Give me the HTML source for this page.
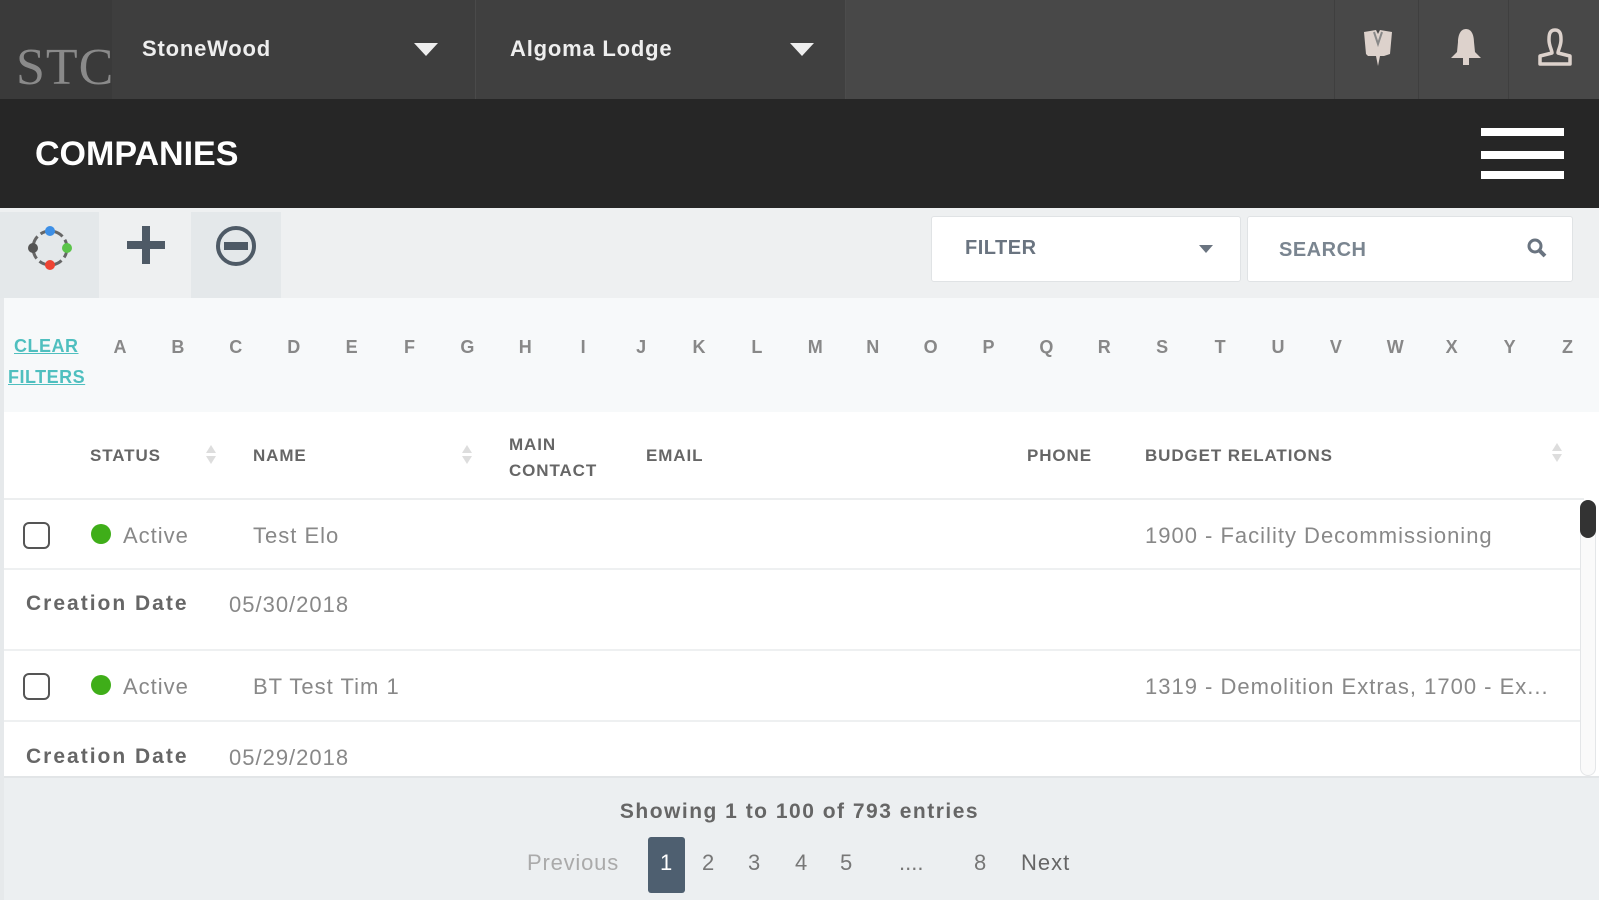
<!DOCTYPE html>
<html><head><meta charset="utf-8"><style>
*{margin:0;padding:0;box-sizing:border-box}
body{width:1599px;height:900px;overflow:hidden;background:#fff;font-family:"Liberation Sans",sans-serif;position:relative}
.a{position:absolute}
.top{left:0;top:0;width:1599px;height:99px;background:#484848}
.lt{color:#888;font-weight:bold;font-size:15px}
.hd{color:#666;font-weight:bold;font-size:17px;letter-spacing:0.9px}
.cell{color:#888;font-size:22px;letter-spacing:1px}
.cd{color:#666;font-weight:bold;font-size:21px;letter-spacing:2px}
.sort{width:8px}
.sort:before{content:"";position:absolute;left:0;top:0;border:5px solid transparent;border-bottom:8px solid #ddd;border-top:none}
.sort:after{content:"";position:absolute;left:0;top:11px;border:5px solid transparent;border-top:8px solid #ddd;border-bottom:none}
.cb{width:27px;height:27px;border:2.5px solid #555;border-radius:6px}
.dot{width:20px;height:20px;border-radius:50%;background:#3fae19}
.pg{font-size:22px;color:#777;top:850px}
</style></head><body>
<div class="a top"></div>
<div class="a" style="left:0;top:0;width:112px;height:99px;background:#3a3a3a"></div>
<div class="a" style="left:16px;top:38px;font-family:'Liberation Serif',serif;font-size:52px;color:#8a8a8a;letter-spacing:1px">STC</div>
<div class="a" style="left:112px;top:0;width:364px;height:99px;background:#3e3e3e;border-right:1px solid #4a4a4a"></div>
<div class="a" style="left:476px;top:0;width:370px;height:99px;background:#404040;border-right:1px solid #4c4c4c"></div>
<div class="a" style="left:142px;top:36px;color:#eee;font-weight:bold;font-size:22px;letter-spacing:0.8px">StoneWood</div>
<div class="a" style="left:414px;top:43px;border:12px solid transparent;border-top:13px solid #eee;border-bottom:none"></div>
<div class="a" style="left:510px;top:36px;color:#eee;font-weight:bold;font-size:22px;letter-spacing:0.8px">Algoma Lodge</div>
<div class="a" style="left:790px;top:43px;border:12px solid transparent;border-top:13px solid #eee;border-bottom:none"></div>
<div class="a" style="left:1334px;top:0;width:1px;height:99px;background:#3f3f3f"></div>
<div class="a" style="left:1418px;top:0;width:1px;height:99px;background:#3f3f3f"></div>
<div class="a" style="left:1508px;top:0;width:1px;height:99px;background:#3f3f3f"></div>
<svg class="a" style="left:1360px;top:26px" width="36" height="44" viewBox="0 0 36 44"><path d="M4 6 L16 4 L18 8 L20 4 L32 6 L30 28 L24 30 L20 30 L18 40 L16 30 L8 30 L6 28Z" fill="#ddd2cc"/><path d="M14 6 L18 18 L22 6" stroke="#888" stroke-width="2" fill="none"/></svg>
<svg class="a" style="left:1448px;top:26px" width="36" height="44" viewBox="0 0 36 44"><path d="M18 3 C24 3 26 10 26 16 L27 26 L33 32 L3 32 L9 26 L10 16 C10 10 12 3 18 3Z" fill="#ddd2cc"/><rect x="15" y="32" width="6" height="7" fill="#ddd2cc"/></svg>
<svg class="a" style="left:1534px;top:26px" width="42" height="44" viewBox="0 0 42 44"><path d="M21 4 C27 4 27 10 27 14 C27 20 24 24 24 27 L36 30 L36 38 L6 38 L6 30 L18 27 C18 24 15 20 15 14 C15 10 15 4 21 4Z" fill="none" stroke="#ddd2cc" stroke-width="3.5" stroke-linejoin="round"/></svg>

<div class="a" style="left:0;top:99px;width:1599px;height:109px;background:#262626"></div>
<div class="a" style="left:35px;top:135px;color:#fff;font-weight:bold;font-size:34px;letter-spacing:0px">COMPANIES</div>
<div class="a" style="left:1481px;top:128px;width:83px;height:8px;background:#fff"></div>
<div class="a" style="left:1481px;top:151px;width:83px;height:8px;background:#fff"></div>
<div class="a" style="left:1481px;top:171px;width:83px;height:8px;background:#fff"></div>

<div class="a" style="left:0;top:208px;width:1599px;height:90px;background:#eef0f1"></div>
<div class="a" style="left:0;top:212px;width:99px;height:86px;background:#e4e8ea"></div>
<div class="a" style="left:191px;top:212px;width:90px;height:86px;background:#e4e8ea"></div>
<svg class="a" style="left:26px;top:224px" width="48" height="48" viewBox="0 0 48 48"><circle cx="24" cy="24" r="17" fill="none" stroke="#666" stroke-width="3" stroke-dasharray="10 4"/><circle cx="24" cy="7" r="5" fill="#3d8fe6"/><circle cx="41" cy="24" r="5" fill="#5bc44a"/><circle cx="24" cy="41" r="5" fill="#ee4433"/><circle cx="7" cy="24" r="5" fill="#555"/></svg>
<div class="a" style="left:127px;top:241px;width:38px;height:8px;background:#4e5a66"></div>
<div class="a" style="left:142px;top:226px;width:8px;height:38px;background:#4e5a66"></div>
<div class="a" style="left:216px;top:226px;width:40px;height:40px;border:4px solid #4e5a66;border-radius:50%"></div>
<div class="a" style="left:224px;top:242px;width:24px;height:8px;background:#4e5a66"></div>
<div class="a" style="left:931px;top:216px;width:310px;height:66px;background:#fff;border:1px solid #e0e3e5;border-radius:3px"></div>
<div class="a" style="left:965px;top:237px;color:#6a7480;font-weight:bold;font-size:20px;letter-spacing:0.5px">FILTER</div>
<div class="a" style="left:1199px;top:245px;border:7px solid transparent;border-top:8px solid #6a7480;border-bottom:none"></div>
<div class="a" style="left:1247px;top:216px;width:326px;height:66px;background:#fff;border:1px solid #e0e3e5;border-radius:3px"></div>
<div class="a" style="left:1279px;top:239px;color:#7a8590;font-weight:bold;font-size:20px;letter-spacing:0.5px">SEARCH</div>
<svg class="a" style="left:1526px;top:237px" width="22" height="22" viewBox="0 0 22 22"><circle cx="9" cy="9" r="6" fill="none" stroke="#6a7480" stroke-width="3"/><path d="M13 13 L19 19" stroke="#6a7480" stroke-width="4"/></svg>

<div class="a" style="left:4px;top:298px;width:1595px;height:114px;background:#f7f9fa"></div>
<div class="a" style="left:0;top:298px;width:4px;height:602px;background:#e6e9eb"></div>
<div class="a" style="left:14px;top:336px;color:#4fbfbf;font-weight:bold;font-size:18px;text-decoration:underline;letter-spacing:0.5px">CLEAR</div>
<div class="a" style="left:8px;top:367px;color:#4fbfbf;font-weight:bold;font-size:18px;text-decoration:underline;letter-spacing:0.5px">FILTERS</div>
<div id="al"></div>

<div class="a" style="left:4px;top:412px;width:1580px;height:88px;background:#fff;border-bottom:2px solid #eceeef"></div>
<div class="a hd" style="left:90px;top:446px">STATUS</div>
<div class="a sort" style="left:206px;top:445px"></div>
<div class="a hd" style="left:253px;top:446px">NAME</div>
<div class="a sort" style="left:462px;top:445px"></div>
<div class="a hd" style="left:509px;top:432px;line-height:26px">MAIN<br>CONTACT</div>
<div class="a hd" style="left:646px;top:446px">EMAIL</div>
<div class="a hd" style="left:1027px;top:446px">PHONE</div>
<div class="a hd" style="left:1145px;top:446px">BUDGET RELATIONS</div>
<div class="a sort" style="left:1552px;top:443px"></div>

<div class="a" style="left:4px;top:568px;width:1576px;height:2px;background:#eef0f1"></div>
<div class="a" style="left:4px;top:649px;width:1576px;height:2px;background:#eef0f1"></div>
<div class="a" style="left:4px;top:720px;width:1576px;height:2px;background:#eef0f1"></div>
<div class="a cb" style="left:23px;top:522px"></div>
<div class="a dot" style="left:91px;top:524px"></div>
<div class="a cell" style="left:123px;top:523px">Active</div>
<div class="a cell" style="left:253px;top:523px">Test Elo</div>
<div class="a cell" style="left:1145px;top:523px">1900 - Facility Decommissioning</div>
<div class="a cd" style="left:26px;top:592px">Creation Date</div>
<div class="a cell" style="left:229px;top:592px">05/30/2018</div>
<div class="a cb" style="left:23px;top:673px"></div>
<div class="a dot" style="left:91px;top:675px"></div>
<div class="a cell" style="left:123px;top:674px">Active</div>
<div class="a cell" style="left:253px;top:674px">BT Test Tim 1</div>
<div class="a cell" style="left:1145px;top:674px">1319 - Demolition Extras, 1700 - Ex...</div>
<div class="a cd" style="left:26px;top:745px">Creation Date</div>
<div class="a cell" style="left:229px;top:745px">05/29/2018</div>
<div class="a" style="left:1580px;top:500px;width:16px;height:276px;border:1px solid #e4e6e8;border-radius:8px;background:#fafafa"></div>
<div class="a" style="left:1580px;top:500px;width:16px;height:38px;border-radius:8px;background:#333"></div>

<div class="a" style="left:4px;top:776px;width:1595px;height:124px;background:#eceff1;border-top:2px solid #e2e5e7"></div>
<div class="a" style="left:0;top:800px;width:1599px;text-align:center;color:#666;font-weight:bold;font-size:21px;letter-spacing:1.5px">Showing 1 to 100 of 793 entries</div>
<div class="a pg" style="left:527px;color:#aaa;letter-spacing:0.8px">Previous</div>
<div class="a" style="left:648px;top:837px;width:37px;height:56px;background:#4e5f70;border-radius:3px"></div>
<div class="a pg" style="left:660px;color:#fff">1</div>
<div class="a pg" style="left:702px">2</div>
<div class="a pg" style="left:748px">3</div>
<div class="a pg" style="left:795px">4</div>
<div class="a pg" style="left:840px">5</div>
<div class="a pg" style="left:899px">....</div>
<div class="a pg" style="left:974px">8</div>
<div class="a pg" style="left:1021px;color:#666;letter-spacing:1px">Next</div>
<script>
var L="ABCDEFGHIJKLMNOPQRSTUVWXYZ",h="";
for(var i=0;i<26;i++){h+='<div class="a lt" style="left:'+(113+i*57.9)+'px;top:337px;width:14px;text-align:center;font-size:18px">'+L[i]+'</div>';}
document.getElementById("al").outerHTML=h;
</script>
</body></html>
